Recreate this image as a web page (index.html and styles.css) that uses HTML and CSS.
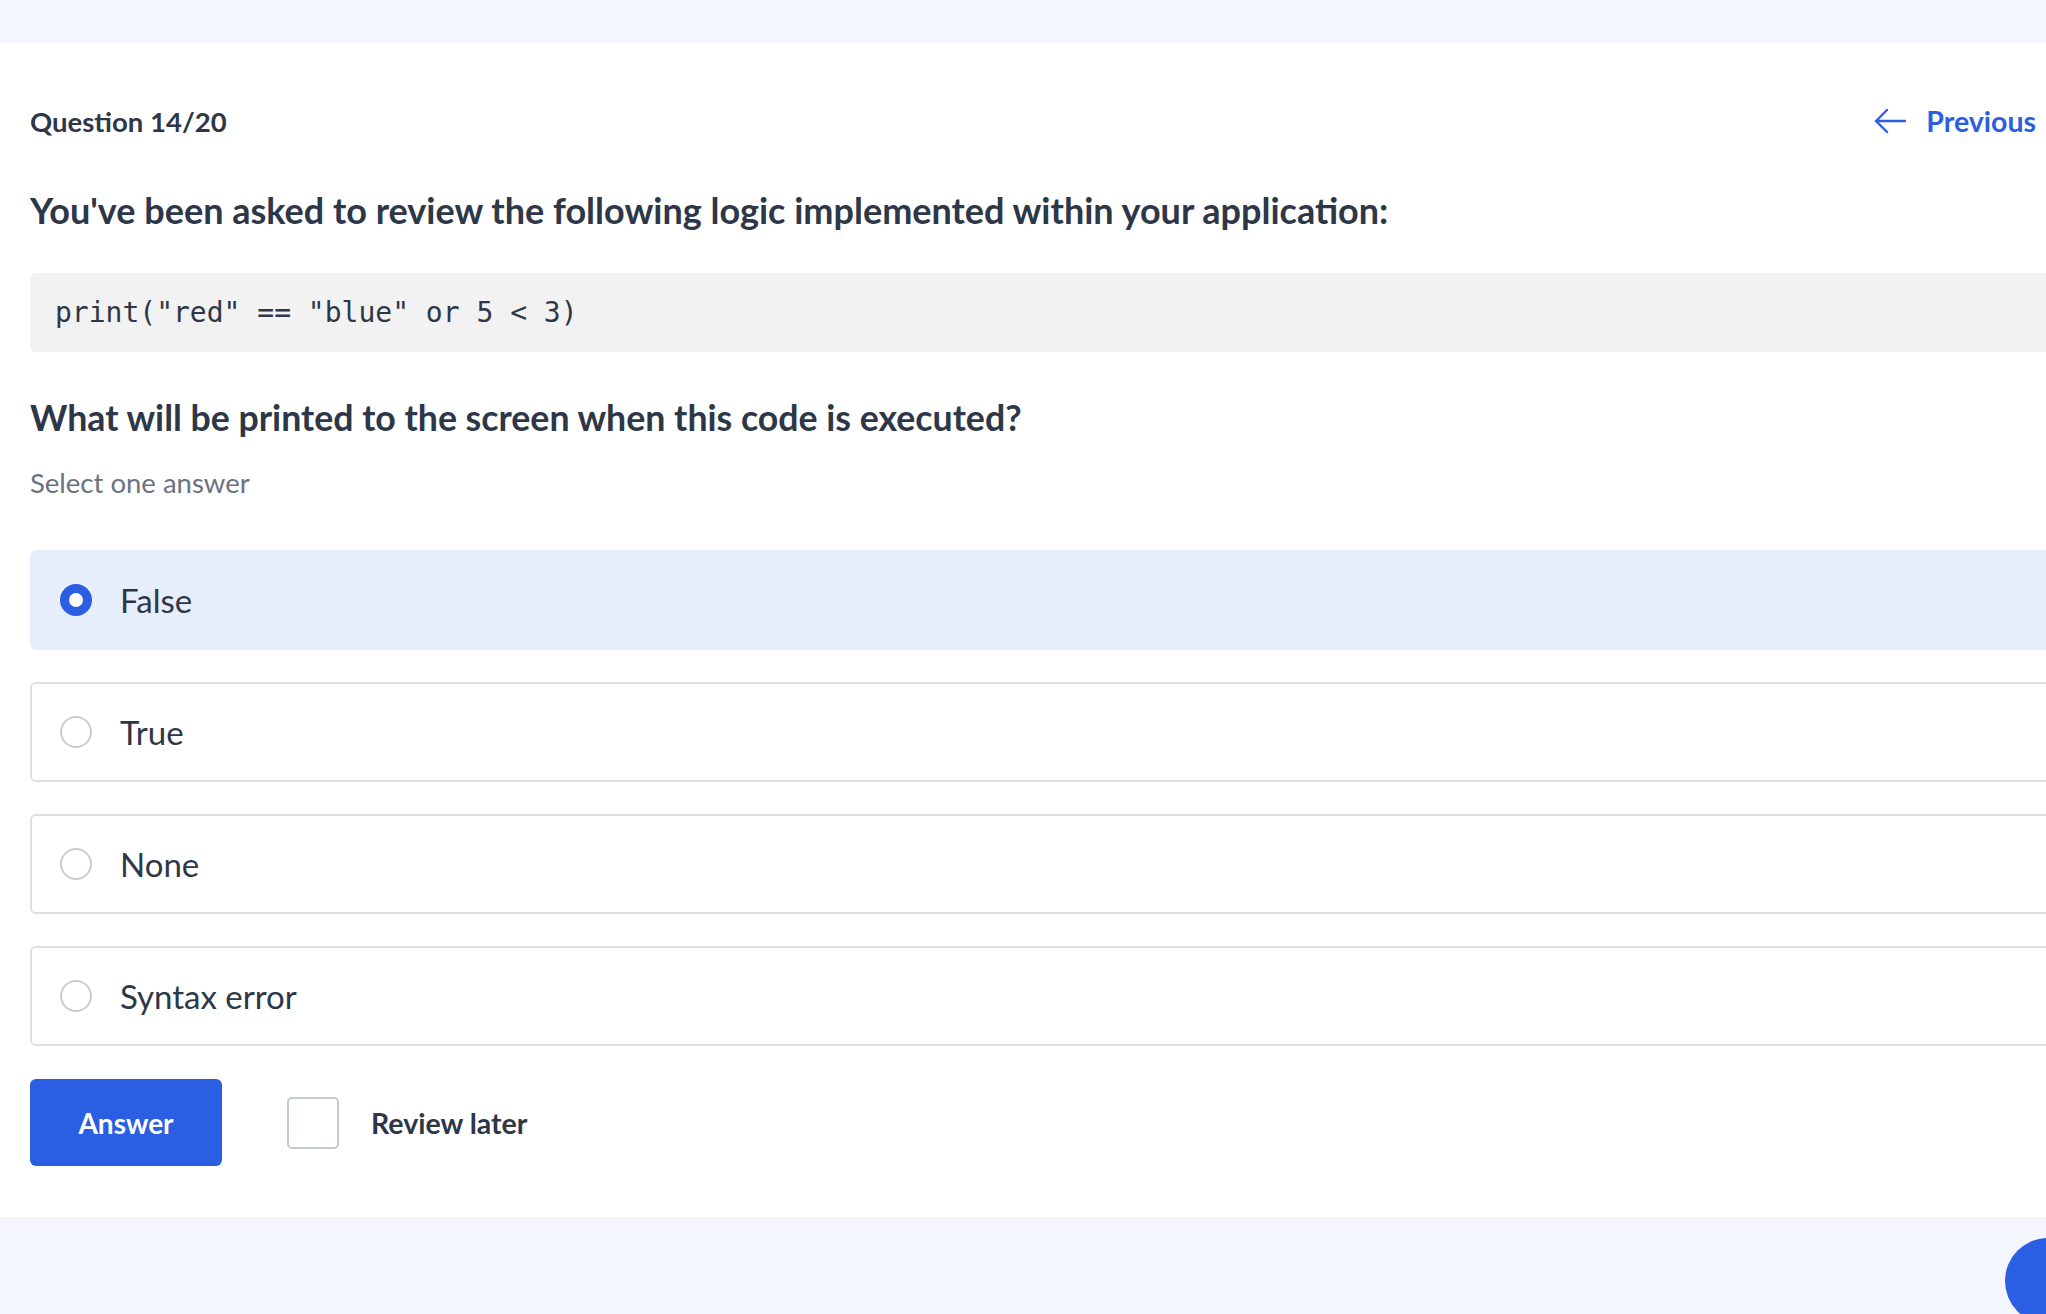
FILE: index.html
```html
<!DOCTYPE html>
<html lang="en">
<head>
<meta charset="utf-8">
<title>Question 14/20</title>
<link rel="stylesheet" href="styles.css">
</head>
<body>
<div class="topband"></div>
<main class="quiz">
  <div class="quiz-header">
    <div class="counter">Question 14/20</div>
    <a class="prev" href="#">
      <svg class="prev-icon" width="32" height="26" viewBox="0 0 32 26" fill="none" stroke="currentColor" stroke-width="2.4" stroke-linecap="round" stroke-linejoin="round"><path d="M31 13H2M13 2L2 13l11 11"/></svg>
      <span>Previous</span>
    </a>
  </div>
  <h1 class="prompt">You've been asked to review the following logic implemented within your application:</h1>
  <pre class="code">print("red" == "blue" or 5 &lt; 3)</pre>
  <h2 class="question">What will be printed to the screen when this code is executed?</h2>
  <p class="hint">Select one answer</p>
  <div class="options">
    <label class="option selected"><span class="radio"></span><span class="opt-text">False</span></label>
    <label class="option"><span class="radio"></span><span class="opt-text">True</span></label>
    <label class="option"><span class="radio"></span><span class="opt-text">None</span></label>
    <label class="option"><span class="radio"></span><span class="opt-text">Syntax error</span></label>
  </div>
  <div class="actions">
    <button class="answer-btn">Answer</button>
    <label class="review"><span class="checkbox"></span><span class="review-text">Review later</span></label>
  </div>
</main>
<div class="bottomband"></div>
<div class="fab"></div>
</body>
</html>
```

FILE: styles.css
```css
* { box-sizing: border-box; }
html, body { margin: 0; padding: 0; }
body {
  width: 2046px;
  height: 1314px;
  overflow: hidden;
  background: #f3f6fe;
  font-family: Lato, "Open Sans", sans-serif;
  color: #2d3748;
  position: relative;
}
.topband { height: 43px; background: #f3f6fe; }
.quiz {
  background: #ffffff;
  padding: 58px 0 51px 30px;
  width: 2046px;
}
.quiz-header {
  display: flex;
  justify-content: space-between;
  align-items: center;
  height: 40px;
  padding-right: 10px;
}
.counter { font-size: 27.5px; font-weight: 700; }
.prev {
  display: flex;
  align-items: center;
  gap: 20px;
  color: #2a5ee3;
  text-decoration: none;
  font-size: 28.5px;
  font-weight: 700;
}
.prev-icon { display: block; }
.prompt {
  margin: 49px 0 0;
  font-size: 36px;
  line-height: 40px;
  font-weight: 700;
}
.code {
  margin: 43px -20px 0 0;
  background: #f2f2f2;
  border-radius: 6px;
  height: 79px;
  padding: 0 0 0 25px;
  display: flex;
  align-items: center;
  font-family: "DejaVu Sans Mono", "Liberation Mono", monospace;
  font-size: 28px;
  color: #2d3748;
}
.question {
  margin: 46px 0 0;
  font-size: 35.7px;
  line-height: 40px;
  font-weight: 700;
}
.hint {
  margin: 29px 0 0;
  font-size: 27.5px;
  line-height: 32px;
  color: #6b7280;
}
.options {
  margin: 51px -20px 0 0;
  display: flex;
  flex-direction: column;
  gap: 32px;
}
.option {
  height: 100px;
  display: flex;
  align-items: center;
  padding-left: 28px;
  border: 2px solid #dcdfe3;
  border-radius: 6px;
  background: #fff;
}
.option.selected {
  background: #e6eefb;
  border-color: #e6eefb;
}
.radio {
  width: 32px;
  height: 32px;
  border-radius: 50%;
  border: 2px solid #c9cdd3;
  background: #fff;
  flex: none;
}
.option.selected .radio {
  border: 9.5px solid #2a5ee3;
}
.opt-text {
  margin-left: 28px;
  font-size: 33px;
  line-height: 40px;
}
.actions {
  margin-top: 33px;
  display: flex;
  align-items: center;
}
.answer-btn {
  width: 192px;
  height: 87px;
  border: none;
  border-radius: 6px;
  background: #2a5ee3;
  color: #fff;
  font-family: Lato, sans-serif;
  font-size: 28px;
  font-weight: 700;
}
.review {
  display: flex;
  align-items: center;
  margin-left: 65px;
}
.checkbox {
  width: 52px;
  height: 52px;
  border: 2px solid #c5c9d0;
  border-radius: 5px;
  flex: none;
}
.review-text {
  margin-left: 32px;
  font-size: 28.5px;
  font-weight: 700;
}
.bottomband { height: 98px; background: #f3f6fe; }
.fab {
  position: absolute;
  left: 2005px;
  top: 1238px;
  width: 86px;
  height: 86px;
  border-radius: 50%;
  background: #2a5ee3;
}
```
